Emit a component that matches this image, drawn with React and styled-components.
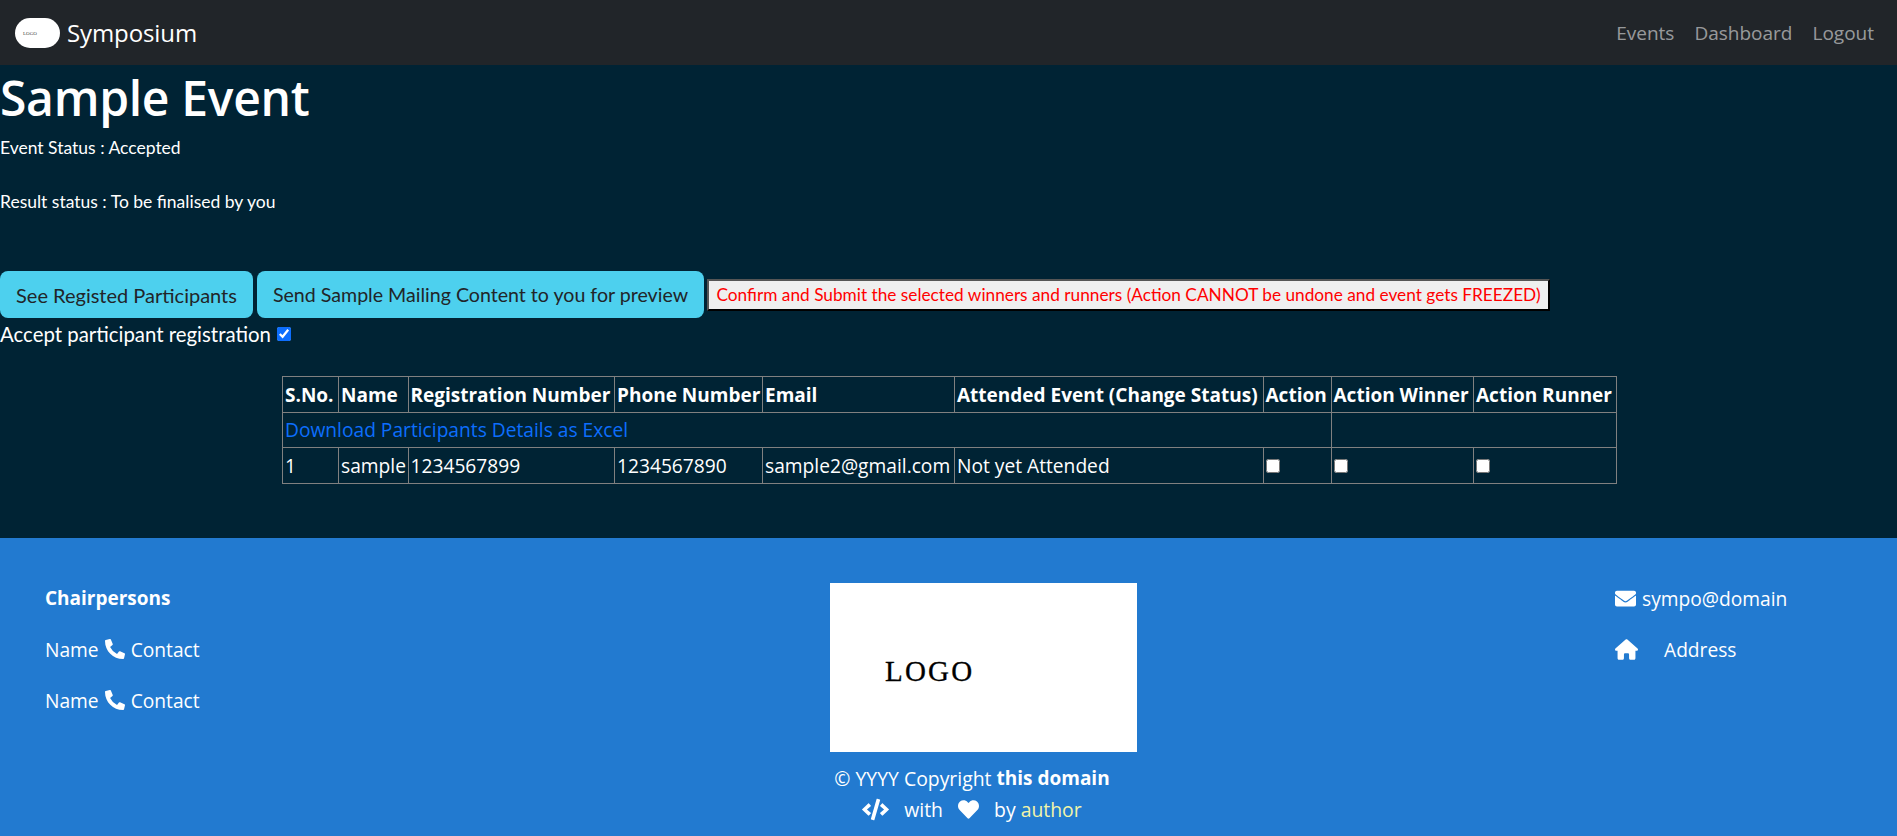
import React from 'react';
import styled, { createGlobalStyle } from 'styled-components';
import { FaPhoneAlt, FaEnvelope, FaCode, FaHeart } from 'react-icons/fa';
import { FaHouse } from 'react-icons/fa6';

const GlobalStyle = createGlobalStyle`
  html, body {
    margin: 0;
    padding: 0;
    background: #002334;
  }
  body {
    font-family: "Open Sans", "Noto Sans", sans-serif;
    font-size: 19px;
    color: #fff;
  }
  * {
    box-sizing: border-box;
  }
`;

const Page = styled.div`
  height: 836px;
  overflow: hidden;
  display: flex;
  flex-direction: column;
`;

const Navbar = styled.nav`
  height: 65px;
  flex: none;
  background: #212529;
  display: flex;
  align-items: center;
  justify-content: space-between;
  padding: 0 23px 0 15px;
`;

const Brand = styled.a`
  display: flex;
  align-items: center;
  gap: 7px;
  color: #fff;
  font-size: 24px;
  letter-spacing: -0.1px;
`;

const BrandLogo = styled.span`
  width: 45px;
  height: 30px;
  margin-top: 1px;
  border-radius: 15px;
  background: #fff;
  color: #444;
  font-family: "Liberation Serif", serif;
  font-size: 5px;
  letter-spacing: 0;
  display: flex;
  align-items: center;
  padding-left: 8px;
`;

const NavLinks = styled.div`
  display: flex;
  gap: 20px;
`;

const NavLink = styled.a`
  color: rgba(255, 255, 255, 0.55);
  font-size: 19px;
`;

const Main = styled.main`
  flex: none;
  height: 473px;
  background: #002334;
`;

const Title = styled.h1`
  margin: 0 0 5px;
  font-size: 48px;
  line-height: 66px;
  font-weight: 600;
  letter-spacing: -0.3px;
`;

const Status = styled.p`
  margin: 0 0 30px;
  font-family: "Lato", sans-serif;
  font-size: 17.5px;
  line-height: 24px;
`;

const Actions = styled.div`
  display: flex;
  align-items: center;
  gap: 4px;
  margin-top: 57px;
`;

const InfoButton = styled.button`
  height: 47px;
  width: ${(p) => p.$width}px;
  padding: 0;
  border: none;
  border-radius: 8px;
  background: #4dd0ee;
  color: #212529;
  font-family: "Lato", sans-serif;
  font-size: ${(p) => p.$size}px;
`;

const ConfirmButton = styled.button`
  height: 32px;
  width: 843px;
  margin-left: -1px;
  padding: 0;
  border: 2px solid #000;
  border-top-color: #555;
  border-left-color: #555;
  background: #efefef;
  color: #f00;
  font-family: "Lato", sans-serif;
  font-size: 17.25px;
`;

const AcceptRow = styled.label`
  display: flex;
  align-items: center;
  gap: 6px;
  height: 32px;
  font-family: "Lato", sans-serif;
  font-size: 20.4px;
`;

const Check = styled.input`
  width: 14px;
  height: 14px;
  margin: 0;
  accent-color: #0d6efd;
`;

const Table = styled.table`
  table-layout: fixed;
  border-collapse: collapse;
  width: 1334px;
  margin: 26px 0 0 282px;
  font-size: 19.2px;
`;

const Cell = styled.td`
  height: 35.5px;
  padding: 0 2px;
  border: 1px solid #808080;
  white-space: nowrap;
  overflow: hidden;
`;

const HeadCell = styled(Cell).attrs({ as: 'th' })`
  padding-top: 2px;
  font-size: 19px;
  font-weight: 700;
  text-align: left;
`;

const DownloadLink = styled.a`
  color: #0d6efd;
`;

const Footer = styled.footer`
  flex: 1;
  background: #227ad0;
  padding: 45px 0 0 45px;
  display: grid;
  grid-template-columns: 785px 785px 1fr;
  align-items: start;
`;

const FooterColumn = styled.div`
  padding-top: 3px;
`;

const FooterLine = styled.p`
  display: flex;
  align-items: center;
  gap: ${(p) => p.$gap || 6}px;
  margin: 0 0 27px;
  height: 24px;
  font-size: 19.2px;
  white-space: nowrap;
`;

const Strong = styled.strong`
  font-size: 19px;
  font-weight: 700;
`;

const FooterLogo = styled.div`
  width: 307px;
  height: 169px;
  background: #fff;
  color: #000;
  font-family: "Liberation Serif", serif;
  font-size: 29px;
  letter-spacing: 2.2px;
  -webkit-text-stroke: 0.3px #000;
  display: flex;
  align-items: flex-end;
  padding: 0 0 64px 55px;
`;

const Credits = styled.div`
  width: 284px;
  margin-top: 14px;
  text-align: center;
  font-size: 19.4px;
  white-space: nowrap;
`;

const CreditLine = styled.div`
  display: flex;
  justify-content: center;
  align-items: center;
  gap: ${(p) => p.$gap || 5}px;
  height: 24px;
  margin-bottom: 7px;
`;

const AuthorLink = styled.a`
  color: #f3f5a8;
`;

const columns = [56, 69.5, 206.5, 148, 192, 308.5, 68, 142.5, 143];
const headers = [
  'S.No.',
  'Name',
  'Registration Number',
  'Phone Number',
  'Email',
  'Attended Event (Change Status)',
  'Action',
  'Action Winner',
  'Action Runner',
];

const App = () => {
  return (
    <Page>
      <GlobalStyle />
      <Navbar>
        <Brand>
          <BrandLogo>LOGO</BrandLogo>
          Symposium
        </Brand>
        <NavLinks>
          <NavLink>Events</NavLink>
          <NavLink>Dashboard</NavLink>
          <NavLink>Logout</NavLink>
        </NavLinks>
      </Navbar>
      <Main>
        <Title>Sample Event</Title>
        <Status>Event Status : Accepted</Status>
        <Status>Result status : To be finalised by you</Status>
        <Actions>
          <InfoButton $width={253} $size={20}>See Registed Participants</InfoButton>
          <InfoButton $width={447} $size={19.6}>Send Sample Mailing Content to you for preview</InfoButton>
          <ConfirmButton>
            Confirm and Submit the selected winners and runners (Action CANNOT be undone and event gets FREEZED)
          </ConfirmButton>
        </Actions>
        <AcceptRow>
          Accept participant registration
          <Check type="checkbox" defaultChecked />
        </AcceptRow>
        <Table>
          <colgroup>
            {columns.map((w, i) => (
              <col key={i} style={{ width: w }} />
            ))}
          </colgroup>
          <thead>
            <tr>
              {headers.map((h) => (
                <HeadCell key={h}>{h}</HeadCell>
              ))}
            </tr>
          </thead>
          <tbody>
            <tr>
              <Cell colSpan={7}>
                <DownloadLink>Download Participants Details as Excel</DownloadLink>
              </Cell>
              <Cell colSpan={2} />
            </tr>
            <tr>
              <Cell>1</Cell>
              <Cell>sample</Cell>
              <Cell>1234567899</Cell>
              <Cell>1234567890</Cell>
              <Cell>sample2@gmail.com</Cell>
              <Cell>Not yet Attended</Cell>
              <Cell><Check type="checkbox" /></Cell>
              <Cell><Check type="checkbox" /></Cell>
              <Cell><Check type="checkbox" /></Cell>
            </tr>
          </tbody>
        </Table>
      </Main>
      <Footer>
        <FooterColumn>
          <FooterLine><Strong>Chairpersons</Strong></FooterLine>
          <FooterLine>Name <FaPhoneAlt size={20} /> Contact</FooterLine>
          <FooterLine>Name <FaPhoneAlt size={20} /> Contact</FooterLine>
        </FooterColumn>
        <div>
          <FooterLogo>LOGO</FooterLogo>
          <Credits>
            <CreditLine>
              © YYYY Copyright <Strong>this domain</Strong>
            </CreditLine>
            <CreditLine $gap={15}>
              <FaCode size={27} />
              <span>with</span>
              <FaHeart size={21} />
              <span>by <AuthorLink>author</AuthorLink></span>
            </CreditLine>
          </Credits>
        </div>
        <FooterColumn>
          <FooterLine><FaEnvelope size={21} /> sympo@domain</FooterLine>
          <FooterLine $gap={26}><FaHouse size={23} /> Address</FooterLine>
        </FooterColumn>
      </Footer>
    </Page>
  );
};

export default App;
